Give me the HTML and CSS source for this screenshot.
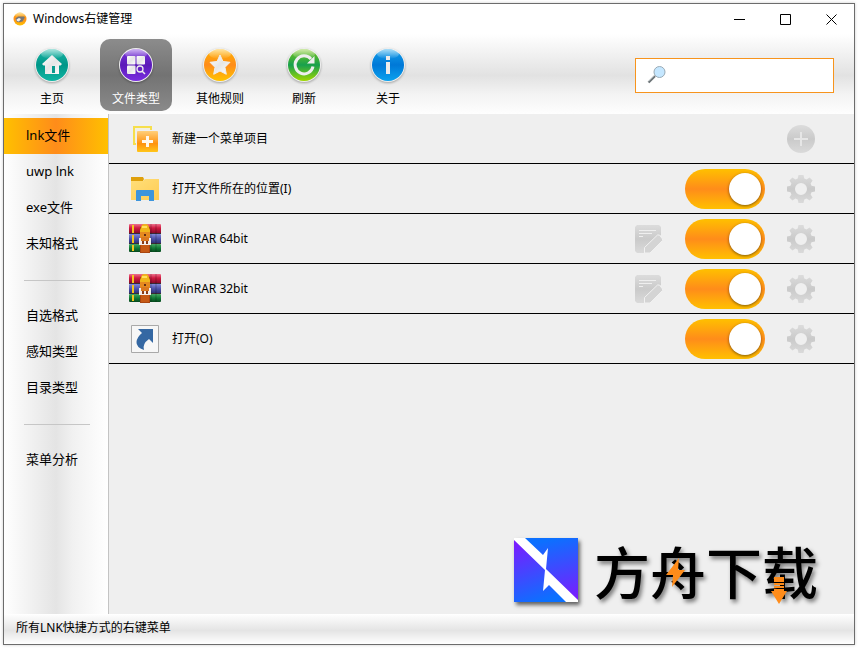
FILE: index.html
```
<!DOCTYPE html>
<html lang="zh-CN">
<head>
<meta charset="utf-8">
<meta name="viewport" content="width=device-width, initial-scale=1">
<title>Windows右键管理</title>
<link rel="stylesheet" href="styles.css">
</head>
<body>
<svg class="defs" width="0" height="0" aria-hidden="true">
  <defs>
    <linearGradient id="paper" x1="0" y1="0" x2="1" y2="1"><stop offset="0" stop-color="#fff"/><stop offset=".5" stop-color="#e6e6e6"/><stop offset="1" stop-color="#fff"/></linearGradient>
    <linearGradient id="teal" x1="0" y1="0" x2="0" y2="1"><stop offset="0" stop-color="#19b5a5"/><stop offset=".5" stop-color="#009688"/><stop offset="1" stop-color="#10b5a3"/></linearGradient>
    <linearGradient id="violet" x1="0" y1="0" x2="0" y2="1"><stop offset="0" stop-color="#7a35dc"/><stop offset=".5" stop-color="#5b1bb8"/><stop offset="1" stop-color="#7a2ee0"/></linearGradient>
    <linearGradient id="amber" x1="0" y1="0" x2="0" y2="1"><stop offset="0" stop-color="#ffb400"/><stop offset=".5" stop-color="#ff8c1a"/><stop offset="1" stop-color="#ffc400"/></linearGradient>
    <linearGradient id="green" x1="0" y1="0" x2="0" y2="1"><stop offset="0" stop-color="#7cc618"/><stop offset=".5" stop-color="#17a04e"/><stop offset="1" stop-color="#a0d800"/></linearGradient>
    <linearGradient id="blue" x1="0" y1="0" x2="0" y2="1"><stop offset="0" stop-color="#12a0ea"/><stop offset=".5" stop-color="#0078d7"/><stop offset="1" stop-color="#0aa2ee"/></linearGradient>
    <linearGradient id="gloss" x1="0" y1="0" x2="0" y2="1"><stop offset="0" stop-color="#fff" stop-opacity=".65"/><stop offset="1" stop-color="#fff" stop-opacity="0"/></linearGradient>
    <linearGradient id="grey" x1="0" y1="0" x2="0" y2="1"><stop offset="0" stop-color="#dcdcdc"/><stop offset=".5" stop-color="#cacaca"/><stop offset="1" stop-color="#dadada"/></linearGradient>
    <linearGradient id="add" x1="0" y1="0" x2="0" y2="1"><stop offset="0" stop-color="#ffcf7a"/><stop offset=".6" stop-color="#ff920f"/><stop offset="1" stop-color="#ffc61a"/></linearGradient>
    <linearGradient id="red" x1="0" y1="0" x2="0" y2="1"><stop offset="0" stop-color="#f0708c"/><stop offset=".4" stop-color="#cf1a41"/><stop offset="1" stop-color="#7d0824"/></linearGradient>
    <linearGradient id="navy" x1="0" y1="0" x2="0" y2="1"><stop offset="0" stop-color="#8187d8"/><stop offset=".5" stop-color="#4a4fa8"/><stop offset="1" stop-color="#292c6c"/></linearGradient>
    <linearGradient id="leaf" x1="0" y1="0" x2="0" y2="1"><stop offset="0" stop-color="#46a863"/><stop offset=".5" stop-color="#117c37"/><stop offset="1" stop-color="#07481d"/></linearGradient>
    <linearGradient id="folder" x1="0" y1="0" x2="1" y2="1"><stop offset="0" stop-color="#ffdf7a"/><stop offset="1" stop-color="#ffcc54"/></linearGradient>
    <linearGradient id="brandUp" x1=".6" y1="0" x2=".8" y2="1"><stop offset="0" stop-color="#0c70ff"/><stop offset="1" stop-color="#7a1cff"/></linearGradient>
    <linearGradient id="brandDown" x1=".2" y1="0" x2=".5" y2="1"><stop offset="0" stop-color="#7a1cff"/><stop offset="1" stop-color="#0c70ff"/></linearGradient>

    <symbol id="winrar" viewBox="0 0 32 32">
      <rect y="1" width="32" height="10" rx="1" fill="url(#red)"/><rect y="11" width="32" height="10" rx="1" fill="url(#navy)"/><rect y="21" width="32" height="8" rx="1" fill="url(#leaf)"/>
      <path d="M0 10.500h32M0 20.500h32" stroke="#3b2b35"/>
      <path d="M3 2h2v8H3zM3 12h2v8H3zM3 22h2v6H3z" fill="#f5c51c"/>
      <path d="M22 1v28M27 1v28" stroke="#000" stroke-opacity=".12" stroke-width="2"/>
      <path d="M11 4h10v26H11z" fill="#a94610"/><path d="M12 22h8v7h-8z" fill="#c65a16"/>
      <path d="M12 5q0-4 4-4t4 4l1 2v3H11V7z" fill="#f0b51b"/><path d="M13 4h5" stroke="#ffe05a" stroke-width="2"/>
      <path d="M11 9h10v6H11z" fill="#e58a20"/><path d="M15 11h2v2h-2z" fill="#643015"/>
      <path d="M10 15h3v2h6v-2h3v7H10z" fill="#f4efec"/><path d="M12 14h8v4h-8z" fill="#d97820"/><path d="M13 18h2v3h-2zM17 18h2v3h-2z" fill="#8b3c18"/>
    </symbol>
    <symbol id="gear" viewBox="0 0 28 28">
      <path fill="url(#grey)" fill-rule="evenodd" d="M11.500 0h5l.8 3.600 2.200.9 3.100-2 3 3-2 3.100.9 2.200 3.500.7v5l-3.500.8-.9 2.200 2 3.100-3 3-3.100-2-2.200.9-.8 3.500h-5l-.8-3.500-2.200-.9-3.100 2-3-3 2-3.100-.9-2.200L0 16.500v-5l3.500-.7.900-2.200-2-3.100 3-3 3.100 2 2.200-.9zM14 8a6 6 0 1 0 0 12 6 6 0 0 0 0-12z"/>
    </symbol>
    <symbol id="note" viewBox="0 0 28 28">
      <path d="M2 0h22l2 2v8L10 26l-1 2H2l-2-2V2z" fill="url(#grey)"/>
      <path d="M4 5.500h17M4 8.500h13M4 11.500h4" stroke="#efefef"/>
      <path d="M9.500 28v-5.500l13-12.500h2l3 4v1.500L15 28z" fill="#d4d4d4" stroke="#f1f1f1"/>
    </symbol>
  </defs>
</svg>

<div class="window">
  <header class="titlebar">
    <svg class="app-icon" viewBox="0 0 14 14" aria-hidden="true"><circle cx="7" cy="7" r="6.500" fill="url(#amber)"/><ellipse cx="7" cy="3" rx="5" ry="2.500" fill="url(#gloss)"/><path d="M2.500 6.500L5 4.500h6l.8 1-2.300 4-3 .8L4 10z" fill="#777"/><path d="M3.500 7.500L6 6l2 1-2 2.500-2-.5z" fill="#eee"/></svg>
    <h1>Windows右键管理</h1>
    <div class="window-buttons">
      <button type="button" aria-label="最小化"><svg viewBox="0 0 11 11"><path d="M0 5.500h11"/></svg></button>
      <button type="button" aria-label="最大化"><svg viewBox="0 0 11 11"><path d="M.5.500h10v10H.5z"/></svg></button>
      <button type="button" aria-label="关闭"><svg viewBox="0 0 11 11"><path d="M.5.500l10 10M10.500.500l-10 10"/></svg></button>
    </div>
  </header>

  <div class="toolbar">
    <nav class="tools">
      <button type="button" class="tool">
        <svg viewBox="0 0 36 36"><circle class="ring" cx="18" cy="18" r="17"/><circle cx="18" cy="18" r="16" fill="url(#teal)"/><ellipse cx="18" cy="7" rx="11" ry="5" fill="url(#gloss)"/><path d="M18 8l10 9-1.500 1.500H25V27H11v-8.500H9.500L8 17z" fill="url(#paper)"/><path d="M18 19h3v7h-3z" fill="#0b9b8e"/></svg>
        <span>主页</span>
      </button>
      <button type="button" class="tool active">
        <svg viewBox="0 0 36 36"><circle class="ring" cx="18" cy="18" r="17"/><circle cx="18" cy="18" r="16" fill="url(#violet)"/><ellipse cx="18" cy="7" rx="11" ry="5" fill="url(#gloss)"/><g fill="url(#paper)"><rect x="9" y="9" width="8.500" height="8.500" rx="1"/><rect x="18.500" y="9" width="8.500" height="8.500" rx="1"/><rect x="9" y="18.500" width="8.500" height="8.500" rx="1"/></g><circle cx="22" cy="22" r="3" fill="none" stroke="#eee" stroke-width="1.300"/><path d="M24 24l3 3" stroke="#eee" stroke-width="1.500"/></svg>
        <span>文件类型</span>
      </button>
      <button type="button" class="tool">
        <svg viewBox="0 0 36 36"><circle class="ring" cx="18" cy="18" r="17"/><circle cx="18" cy="18" r="16" fill="url(#amber)"/><ellipse cx="18" cy="7" rx="11" ry="5" fill="url(#gloss)"/><path d="M18 8l3 6.500 7 .8-5 5 1.300 7L18 24l-6.300 3.300 1.300-7-5-5 7-.8z" fill="url(#paper)" stroke="#eee" stroke-linejoin="round"/></svg>
        <span>其他规则</span>
      </button>
      <button type="button" class="tool">
        <svg viewBox="0 0 36 36"><circle class="ring" cx="18" cy="18" r="17"/><circle cx="18" cy="18" r="16" fill="url(#green)"/><ellipse cx="18" cy="7" rx="11" ry="5" fill="url(#gloss)"/><path d="M25 12a9 9 0 1 0 2 7.500" fill="none" stroke="#eee" stroke-width="3"/><path d="M28.500 9v7.500H21z" fill="#eee"/></svg>
        <span>刷新</span>
      </button>
      <button type="button" class="tool">
        <svg viewBox="0 0 36 36"><circle class="ring" cx="18" cy="18" r="17"/><circle cx="18" cy="18" r="16" fill="url(#blue)"/><ellipse cx="18" cy="7" rx="11" ry="5" fill="url(#gloss)"/><path d="M16 9h4v4h-4zM16 15h4v12h-4z" fill="#ececec"/></svg>
        <span>关于</span>
      </button>
    </nav>
    <label class="search">
      <svg viewBox="0 0 20 20" aria-hidden="true"><path d="M1.500 17.500L8 11" stroke="#6d7477" stroke-width="2.400"/><path d="M1.500 16.500L7 11" stroke="#a7afb2"/><circle cx="12.500" cy="7" r="5.500" fill="#c5e7ff" stroke="#9aabb6"/></svg>
      <input type="text" aria-label="搜索">
    </label>
  </div>

  <div class="content">
    <nav class="sidebar">
      <button type="button" class="selected">lnk文件</button>
      <button type="button">uwp lnk</button>
      <button type="button">exe文件</button>
      <button type="button">未知格式</button>
      <hr>
      <button type="button">自选格式</button>
      <button type="button">感知类型</button>
      <button type="button">目录类型</button>
      <hr>
      <button type="button">菜单分析</button>
    </nav>

    <main>
      <ul class="items">
        <li>
          <svg class="item-icon" viewBox="0 0 32 32"><path d="M5 4h17v17H5z" fill="#f3f0e0" stroke="#f6df4c" stroke-width="2"/><rect x="7" y="7" width="22" height="22" rx="2" fill="#efefef"/><rect x="8" y="8" width="21" height="21" rx="1" fill="url(#add)"/><path d="M18.500 13v11M13 18.500h11" stroke="#fff8ec" stroke-width="3"/></svg>
          <span class="name">新建一个菜单项目</span>
          <button type="button" class="action" aria-label="新建"><svg viewBox="0 0 28 28"><circle cx="14" cy="14" r="14" fill="url(#grey)"/><path d="M14 7v14M7 14h14" stroke="#e6e6e6" stroke-width="2"/></svg></button>
        </li>
        <li>
          <svg class="item-icon" viewBox="0 0 32 32"><path d="M2 4h12l1 2-1 2h16v4H2z" fill="#dfa00c"/><path d="M2 8h12l2-2h14v21H2z" fill="url(#folder)"/><path d="M7 18q0-1 1-1h16q1 0 1 1v10h-5v-5h-8v5H7z" fill="#3d95dc"/></svg>
          <label class="name" for="t1">打开文件所在的位置(I)</label>
          <input type="checkbox" class="toggle" id="t1" checked>
          <button type="button" class="action" aria-label="设置"><svg><use href="#gear"/></svg></button>
        </li>
        <li>
          <svg class="item-icon"><use href="#winrar"/></svg>
          <label class="name" for="t2">WinRAR 64bit</label>
          <button type="button" class="action" aria-label="编辑"><svg><use href="#note"/></svg></button>
          <input type="checkbox" class="toggle" id="t2" checked>
          <button type="button" class="action" aria-label="设置"><svg><use href="#gear"/></svg></button>
        </li>
        <li>
          <svg class="item-icon"><use href="#winrar"/></svg>
          <label class="name" for="t3">WinRAR 32bit</label>
          <button type="button" class="action" aria-label="编辑"><svg><use href="#note"/></svg></button>
          <input type="checkbox" class="toggle" id="t3" checked>
          <button type="button" class="action" aria-label="设置"><svg><use href="#gear"/></svg></button>
        </li>
        <li>
          <svg class="item-icon" viewBox="0 0 32 32"><path d="M2.500 2.500h27v27h-27z" fill="#f7f7f7" stroke="#a9a9a9"/><path d="M9 6h15v14l-4-4q-7 5-5 11Q7 24 7.500 19 8 14 13 10z" fill="#3568a3"/></svg>
          <label class="name" for="t4">打开(O)</label>
          <input type="checkbox" class="toggle" id="t4" checked>
          <button type="button" class="action" aria-label="设置"><svg><use href="#gear"/></svg></button>
        </li>
      </ul>

      <div class="brand">
        <svg class="brand-mark" viewBox="0 0 64 64" aria-hidden="true"><path d="M0 0h64v64H0z" fill="#fff"/><path d="M11 0h53v62L32 31l2-21-5 7z" fill="url(#brandUp)"/><path d="M0 2l31 30-2 21 6-6 17 17H0z" fill="url(#brandDown)"/></svg>
        <div class="brand-name">方舟下载
          <svg class="bolt" viewBox="0 0 19 29" aria-hidden="true"><path d="M13 0L0 17h7l-1 12 13-17h-7z"/></svg>
          <svg class="down" viewBox="0 0 16 27" aria-hidden="true"><path d="M3 0h10v5H3zM3 6h10v2H3zM3 9h10v2H3zM3 12h10v2h3l-8 13-8-13h3z"/></svg>
        </div>
      </div>
    </main>
  </div>

  <footer>所有LNK快捷方式的右键菜单</footer>
</div>
</body>
</html>
```
FILE: styles.css
```
* { box-sizing: border-box; }

body {
  margin: 0;
  min-height: 100vh;
  padding: 3px 4px 4px 3px;
  display: flex;
  background: #fff;
  color: #000;
  font: 12px/16px "Noto Sans", "Noto Sans CJK SC", sans-serif;
}

button, input { font: inherit; color: inherit; }
button { border: 0; padding: 0; background: none; }
svg { display: block; }
.defs { position: absolute; }

.window {
  flex: 1;
  min-width: 0;
  display: flex;
  flex-direction: column;
  border: 1px solid #6c6c6c;
  box-shadow: 0 0 3px rgba(0, 0, 0, .2);
}

/* Title bar */
.titlebar { display: flex; align-items: center; height: 30px; padding-left: 9px; gap: 6px; background: #fff; }
.app-icon { width: 14px; height: 14px; }
h1 { flex: 1; margin: 0; font-size: 12px; font-weight: 400; }
.window-buttons { display: flex; }
.window-buttons button { width: 46px; height: 28px; display: grid; place-items: center; }
.window-buttons svg { width: 11px; height: 11px; fill: none; stroke: #000; }

/* Toolbar */
.toolbar {
  display: flex;
  align-items: center;
  justify-content: space-between;
  height: 80px;
  padding: 2px 20px 0 12px;
  background: linear-gradient(#fff, #e2e2e2 52%, #f3f3f3 75%, #fefefe);
}
.tools { display: flex; gap: 12px; }
.tool {
  width: 72px;
  height: 72px;
  display: flex;
  flex-direction: column;
  align-items: center;
  gap: 8px;
  padding-top: 8px;
  border-radius: 10px;
}
.tool svg { width: 36px; height: 36px; filter: drop-shadow(0 1px 1px rgba(0, 0, 0, .3)); }
.tool .ring { fill: #eee; }
.tool.active { background: linear-gradient(#8c8c8c, #737373 50%, #8a8a8a); color: #fff; }
.search {
  display: flex;
  align-items: center;
  width: 199px;
  height: 35px;
  padding: 0 11px;
  gap: 8px;
  border: 1px solid #f7941d;
  background: #fff;
}
.search svg { width: 20px; height: 20px; }
.search input { flex: 1; min-width: 0; border: 0; outline: 0; background: none; }

/* Sidebar and list */
.content { flex: 1; display: flex; background: #efefef; }
.sidebar {
  width: 105px;
  display: flex;
  flex-direction: column;
  padding-top: 4px;
  border-right: 1px solid #c4c4c4;
  background: linear-gradient(90deg, #fff, #e4e4e4 50%, #f1f1f1 66%, #fff);
}
.sidebar button { height: 36px; padding: 0 0 2px 22px; text-align: left; font-size: 13px; }
.sidebar .selected { background: linear-gradient(90deg, #ffc000, #ff8c1a 50%, #ffc000); }
.sidebar hr { width: 66px; height: 1px; margin: 18px 18px 17px 20px; border: 0; background: #c6c6c6; }

main { flex: 1; display: flex; flex-direction: column; justify-content: space-between; }
.items { margin: 0; padding: 0; list-style: none; }
.items li {
  display: flex;
  align-items: center;
  height: 50px;
  padding: 0 39px 0 20px;
  gap: 22px;
  border-bottom: 1px solid #000;
}
.item-icon { width: 32px; height: 32px; margin-right: -11px; }
.name { flex: 1; }
.action, .action svg { width: 28px; height: 28px; }
.toggle {
  appearance: none;
  display: flex;
  align-items: center;
  justify-content: flex-end;
  width: 80px;
  height: 40px;
  margin: 0;
  padding: 4px;
  border-radius: 20px;
  background: linear-gradient(#ffc000, #ff8c1a 50%, #ffc000);
}
.toggle::before {
  content: "";
  width: 32px;
  height: 32px;
  border-radius: 50%;
  background: #fff;
  box-shadow: 0 1px 3px rgba(0, 0, 0, .5);
}
.toggle:not(:checked) { justify-content: flex-start; background: #c8c8c8; }

/* Brand */
.brand { align-self: flex-end; display: flex; align-items: center; gap: 16px; padding: 0 36px 12px 0; }
.brand-mark { width: 64px; height: 64px; box-shadow: 2px 3px 4px rgba(0, 0, 0, .6); }
.brand-name {
  position: relative;
  font-family: "Noto Sans CJK SC", sans-serif;
  font-size: 56px;
  line-height: 64px;
  font-weight: 500;
  text-shadow: 2px 3px 4px rgba(0, 0, 0, .5);
}
.brand-name svg { position: absolute; fill: #ff8c1a; }
.bolt { left: 72px; top: 20px; width: 19px; height: 29px; }
.down { left: 177px; top: 39px; width: 16px; height: 27px; }

footer {
  height: 30px;
  padding: 6px 12px;
  background: linear-gradient(#fff, #e4e4e4 55%, #fff);
}
```
